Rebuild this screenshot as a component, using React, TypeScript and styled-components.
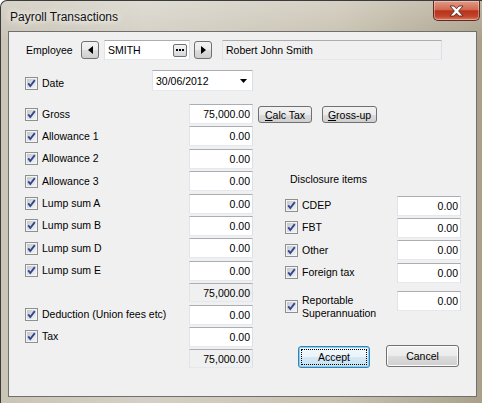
import React from 'react';
import styled, { createGlobalStyle, css } from 'styled-components';

const GlobalStyle = createGlobalStyle`
  html, body {
    margin: 0;
    padding: 0;
    background: #ffffff;
  }
  body {
    font-family: "Liberation Sans", Arial, sans-serif;
    font-size: 10.5px;
    color: #000;
  }
`;

const Frame = styled.div`
  width: 482px;
  height: 403px;
  box-sizing: border-box;
  display: flex;
  flex-direction: column;
  border-left: 1px solid #3b3b3b;
  border-top: 1px solid #3b3b3b;
  border-radius: 7px 0 0 0;
  overflow: hidden;
  background:
    linear-gradient(180deg, rgba(255, 255, 255, 0.25), rgba(255, 255, 255, 0) 40px),
    linear-gradient(90deg, #c9c4b6 0%, #d4d0c5 30%, #c8c2b1 70%, #aaa08a 100%);
`;

const TitleBar = styled.div`
  height: 30px;
  flex-shrink: 0;
  display: flex;
  align-items: flex-start;
  justify-content: space-between;
`;

const Title = styled.span`
  margin: 9px 0 0 9px;
  font-size: 12px;
  line-height: 14px;
  color: #111;
  text-shadow: 0 0 6px #fff, 0 0 10px #fff;
`;

const CloseButton = styled.div`
  width: 47px;
  height: 20px;
  margin-right: 2px;
  box-sizing: border-box;
  border: 1px solid #5e2a22;
  border-top: none;
  border-radius: 0 0 5px 5px;
  display: flex;
  align-items: center;
  justify-content: center;
  background: linear-gradient(180deg, #e39a86 0%, #d06a52 45%, #b9321b 52%, #c0432a 80%, #db7b5d 100%);
  box-shadow: inset 0 0 0 1px rgba(255, 255, 255, 0.35);
`;

const Client = styled.div`
  margin: 0 5px 6px 7px;
  height: 366px;
  box-sizing: border-box;
  border: 1px solid #6f6f6f;
  background: #f0f0f0;
  padding: 8px 15px 0 16px;
  display: flex;
  flex-direction: column;
`;

const EmployeeRow = styled.div`
  display: flex;
  align-items: center;
  height: 20px;
`;

const EmployeeLabel = styled.span`
  width: 55px;
  margin-left: 1px;
`;

const NavButton = styled.div<{ $gap: number }>`
  width: 18px;
  height: 18px;
  box-sizing: border-box;
  margin-right: ${({ $gap }) => $gap}px;
  border: 1px solid #707070;
  border-radius: 3px;
  display: flex;
  align-items: center;
  justify-content: center;
  background: linear-gradient(180deg, #f2f2f2 0%, #ebebeb 50%, #dddddd 51%, #cfcfcf 100%);
`;

const textBox = css`
  box-sizing: border-box;
  height: 20px;
  border: 1px solid;
  border-color: #abadb3 #dbdfe6 #e3e9ef #e2e3ea;
  display: flex;
  align-items: center;
`;

const CodeBox = styled.div`
  ${textBox};
  width: 86px;
  margin-right: 4px;
  background: #fff;
  padding: 0 2px 0 3px;
  justify-content: space-between;
`;

const EllipsisButton = styled.div`
  width: 14px;
  height: 13px;
  box-sizing: border-box;
  border: 1px solid #707070;
  border-radius: 2px;
  display: flex;
  align-items: center;
  justify-content: center;
  background: linear-gradient(180deg, #f4f4f4 0%, #e6e6e6 50%, #d6d6d6 100%);
`;

const NameBox = styled.div`
  ${textBox};
  width: 220px;
  padding-left: 3px;
  background: #f0f0f0;
`;

const Body = styled.div`
  display: flex;
  gap: 5px;
  margin-top: 10px;
`;

const LeftColumn = styled.div`
  width: 228px;
  display: flex;
  flex-direction: column;
`;

const RightColumn = styled.div`
  flex: 1;
  display: flex;
  flex-direction: column;
`;

const DateRow = styled.div`
  display: flex;
  align-items: flex-start;
  height: 21px;
`;

const DatePicker = styled.div`
  ${textBox};
  height: 21px;
  width: 101px;
  margin-left: auto;
  background: #fff;
  padding: 0 5px 0 3px;
  justify-content: space-between;
`;

const Rows = styled.div<{ $top: number }>`
  display: flex;
  flex-direction: column;
  gap: 2.4px;
  margin-top: ${({ $top }) => $top}px;
`;

const FieldRow = styled.div<{ $tall?: boolean }>`
  display: flex;
  align-items: ${({ $tall }) => ($tall ? 'flex-start' : 'center')};
  min-height: 19px;
`;

const BoxWrap = styled.span<{ $top?: number }>`
  display: flex;
  margin-top: ${({ $top }) => $top ?? 0}px;
`;

const Label = styled.span<{ $top?: number }>`
  flex: 1;
  margin-left: 4px;
  margin-top: ${({ $top }) => $top ?? 0}px;
  line-height: 13px;
  white-space: nowrap;
`;

const Amount = styled.div<{ $total?: boolean }>`
  ${textBox};
  width: 64px;
  height: ${({ $total }) => ($total ? 19 : 20)}px;
  margin-left: auto;
  justify-content: flex-end;
  padding-right: 2px;
  background: ${({ $total }) => ($total ? '#f0f0f0' : '#fff')};
`;

const Spacer = styled.div<{ $h: number }>`
  height: ${({ $h }) => $h}px;
  flex-shrink: 0;
`;

const ToolButtons = styled.div`
  display: flex;
  gap: 10px;
  margin-top: 36px;
`;

const ToolButton = styled.div<{ $w: number }>`
  width: ${({ $w }) => $w}px;
  height: 17px;
  box-sizing: border-box;
  border: 1px solid #707070;
  border-radius: 3px;
  display: flex;
  align-items: center;
  justify-content: center;
  background: linear-gradient(180deg, #f2f2f2 0%, #ebebeb 50%, #dddddd 51%, #cfcfcf 100%);
`;

const Heading = styled.div`
  margin: 50px 0 0 32px;
  line-height: 13px;
`;

const Disclosure = styled.div`
  padding-left: 27px;
`;

const DialogButtons = styled.div`
  display: flex;
  justify-content: flex-end;
  align-items: flex-start;
  gap: 16px;
  margin-top: 25px;
  padding-right: 2px;
`;

const DialogButton = styled.div<{ $default?: boolean }>`
  position: relative;
  width: ${({ $default }) => ($default ? 72 : 73)}px;
  height: 22px;
  box-sizing: border-box;
  margin-top: ${({ $default }) => ($default ? 1 : 0)}px;
  border: 1px solid ${({ $default }) => ($default ? '#3c7fb1' : '#707070')};
  border-radius: 3px;
  display: flex;
  align-items: center;
  justify-content: center;
  background: ${({ $default }) =>
    $default
      ? 'linear-gradient(180deg, #f2f8fb 0%, #e9f3f9 50%, #d5e9f5 51%, #c6e0f0 100%)'
      : 'linear-gradient(180deg, #f2f2f2 0%, #ebebeb 50%, #dddddd 51%, #cfcfcf 100%)'};
  box-shadow: ${({ $default }) => ($default ? 'inset 0 0 0 1px #7fd3f7' : 'inset 0 0 0 1px #fcfcfc')};

  ${({ $default }) =>
    $default &&
    css`
      &::after {
        content: '';
        position: absolute;
        inset: 2px;
        border: 1px dotted #000;
      }
    `}
`;

const Hotkey = styled.span`
  text-decoration: underline;
`;

const CheckBox = () => (
  <svg width="13" height="13" viewBox="0 0 13 13">
    <defs>
      <linearGradient id="cbg" x1="0" y1="0" x2="1" y2="1">
        <stop offset="0" stopColor="#c4c8ce" />
        <stop offset="1" stopColor="#f3f4f5" />
      </linearGradient>
    </defs>
    <rect x="0.5" y="0.5" width="12" height="12" fill="#f4f4f4" stroke="#8e8f8f" />
    <rect x="2" y="2" width="9" height="9" fill="url(#cbg)" />
    <path d="M3.2 6.4 L5.3 9 L9.8 3.2" fill="none" stroke="#33468f" strokeWidth="1.9" />
  </svg>
);

const Triangle = ({ dir }: { dir: 'left' | 'right' | 'down' }) => {
  if (dir === 'down') {
    return (
      <svg width="7" height="4" viewBox="0 0 7 4">
        <path d="M0 0 H7 L3.5 4 Z" fill="#000" />
      </svg>
    );
  }
  return (
    <svg width="5" height="8" viewBox="0 0 5 8">
      <path d={dir === 'left' ? 'M5 0 V8 L0 4 Z' : 'M0 0 V8 L5 4 Z'} fill="#000" />
    </svg>
  );
};

const Dots = () => (
  <svg width="8" height="2" viewBox="0 0 8 2">
    <rect x="0" y="0" width="2" height="2" fill="#000" />
    <rect x="3" y="0" width="2" height="2" fill="#000" />
    <rect x="6" y="0" width="2" height="2" fill="#000" />
  </svg>
);

const CloseGlyph = () => (
  <svg width="15" height="12" viewBox="0 0 15 12">
    <path
      d="M1 1 H5 L7.5 3.8 L10 1 H14 L9.6 6 L14 11 H10 L7.5 8.2 L5 11 H1 L5.4 6 Z"
      fill="#fff"
      stroke="#5a2a22"
      strokeWidth="0.9"
      strokeLinejoin="round"
    />
  </svg>
);

type Field = { label: string; value: string };

const leftFields: Field[] = [
  { label: 'Gross', value: '75,000.00' },
  { label: 'Allowance 1', value: '0.00' },
  { label: 'Allowance 2', value: '0.00' },
  { label: 'Allowance 3', value: '0.00' },
  { label: 'Lump sum A', value: '0.00' },
  { label: 'Lump sum B', value: '0.00' },
  { label: 'Lump sum D', value: '0.00' },
  { label: 'Lump sum E', value: '0.00' },
];

const disclosureFields: Field[] = [
  { label: 'CDEP', value: '0.00' },
  { label: 'FBT', value: '0.00' },
  { label: 'Other', value: '0.00' },
  { label: 'Foreign tax', value: '0.00' },
];

const FieldLine = ({ label, value }: Field) => (
  <FieldRow>
    <BoxWrap>
      <CheckBox />
    </BoxWrap>
    <Label>{label}</Label>
    <Amount>{value}</Amount>
  </FieldRow>
);

export default function App() {
  return (
    <>
      <GlobalStyle />
      <Frame>
        <TitleBar>
          <Title>Payroll Transactions</Title>
          <CloseButton>
            <CloseGlyph />
          </CloseButton>
        </TitleBar>
        <Client>
          <EmployeeRow>
            <EmployeeLabel>Employee</EmployeeLabel>
            <NavButton $gap={5}>
              <Triangle dir="left" />
            </NavButton>
            <CodeBox>
              <span>SMITH</span>
              <EllipsisButton>
                <Dots />
              </EllipsisButton>
            </CodeBox>
            <NavButton $gap={10}>
              <Triangle dir="right" />
            </NavButton>
            <NameBox>Robert John Smith</NameBox>
          </EmployeeRow>

          <Body>
            <LeftColumn>
              <DateRow>
                <BoxWrap $top={7}>
                  <CheckBox />
                </BoxWrap>
                <Label $top={7}>Date</Label>
                <DatePicker>
                  <span>30/06/2012</span>
                  <Triangle dir="down" />
                </DatePicker>
              </DateRow>

              <Rows $top={13}>
                {leftFields.map((f) => (
                  <FieldLine key={f.label} {...f} />
                ))}
                <FieldRow>
                  <Amount $total>75,000.00</Amount>
                </FieldRow>
                <FieldLine label="Deduction (Union fees etc)" value="0.00" />
                <FieldLine label="Tax" value="0.00" />
                <FieldRow>
                  <Amount $total>75,000.00</Amount>
                </FieldRow>
              </Rows>
            </LeftColumn>

            <RightColumn>
              <ToolButtons>
                <ToolButton $w={54}>
                  <span>
                    <Hotkey>C</Hotkey>alc Tax
                  </span>
                </ToolButton>
                <ToolButton $w={55}>
                  <span>
                    <Hotkey>G</Hotkey>ross-up
                  </span>
                </ToolButton>
              </ToolButtons>

              <Heading>Disclosure items</Heading>

              <Disclosure>
                <Rows $top={9.5}>
                  {disclosureFields.map((f) => (
                    <FieldLine key={f.label} {...f} />
                  ))}
                  <Spacer $h={3.2} />
                  <FieldRow $tall>
                    <BoxWrap $top={9}>
                      <CheckBox />
                    </BoxWrap>
                    <Label $top={3}>
                      Reportable
                      <br />
                      Superannuation
                    </Label>
                    <Amount>0.00</Amount>
                  </FieldRow>
                </Rows>
              </Disclosure>

              <DialogButtons>
                <DialogButton $default>Accept</DialogButton>
                <DialogButton>Cancel</DialogButton>
              </DialogButtons>
            </RightColumn>
          </Body>
        </Client>
      </Frame>
    </>
  );
}
